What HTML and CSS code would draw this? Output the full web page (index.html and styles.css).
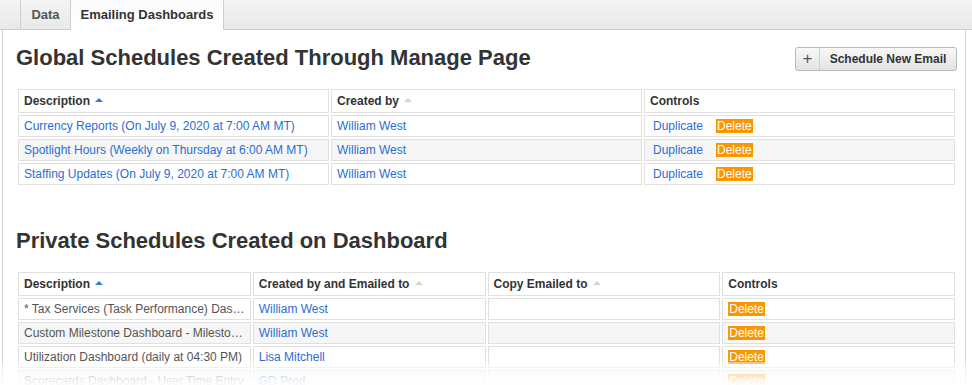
FILE: index.html
```html
<!DOCTYPE html>
<html>
<head>
<title>Emailing Dashboards</title>
<link rel="stylesheet" href="styles.css">
</head>
<body>
<div class="tabbar">
  <div class="tab-spacer"></div>
  <div class="tab">Data</div>
  <div class="tab active">Emailing Dashboards</div>
</div>

<div class="panel">
  <div class="section-head">
    <h1>Global Schedules Created Through Manage Page</h1>
    <button class="new-btn"><span class="plus">+</span><span class="label">Schedule New Email</span></button>
  </div>

  <table class="grid thirds">
    <tr>
      <th>Description <span class="sort on"></span></th>
      <th>Created by <span class="sort"></span></th>
      <th>Controls</th>
    </tr>
    <tr>
      <td><a href="#">Currency Reports (On July 9, 2020 at 7:00 AM MT)</a></td>
      <td><a href="#">William West</a></td>
      <td><a href="#" class="dup">Duplicate</a><span class="delete">Delete</span></td>
    </tr>
    <tr class="alt">
      <td><a href="#">Spotlight Hours (Weekly on Thursday at 6:00 AM MT)</a></td>
      <td><a href="#">William West</a></td>
      <td><a href="#" class="dup">Duplicate</a><span class="delete">Delete</span></td>
    </tr>
    <tr>
      <td><a href="#">Staffing Updates (On July 9, 2020 at 7:00 AM MT)</a></td>
      <td><a href="#">William West</a></td>
      <td><a href="#" class="dup">Duplicate</a><span class="delete">Delete</span></td>
    </tr>
  </table>

  <h1 class="second">Private Schedules Created on Dashboard</h1>

  <table class="grid quarters">
    <tr>
      <th>Description <span class="sort on"></span></th>
      <th>Created by and Emailed to <span class="sort"></span></th>
      <th>Copy Emailed to <span class="sort"></span></th>
      <th>Controls</th>
    </tr>
    <tr>
      <td class="desc">* Tax Services (Task Performance) Dashboard</td>
      <td><a href="#">William West</a></td>
      <td></td>
      <td><span class="delete">Delete</span></td>
    </tr>
    <tr class="alt">
      <td class="desc">Custom Milestone Dashboard - Milestones by Project</td>
      <td><a href="#">William West</a></td>
      <td></td>
      <td><span class="delete">Delete</span></td>
    </tr>
    <tr>
      <td class="desc">Utilization Dashboard (daily at 04:30 PM)</td>
      <td><a href="#">Lisa Mitchell</a></td>
      <td></td>
      <td><span class="delete">Delete</span></td>
    </tr>
    <tr class="alt">
      <td class="desc">Scorecards Dashboard - User Time Entry</td>
      <td><a href="#">GD Prod</a></td>
      <td></td>
      <td><span class="delete">Delete</span></td>
    </tr>
  </table>
</div>

<div class="fade"></div>
</body>
</html>
```

FILE: styles.css
```css
body {
  margin: 0;
  padding: 0;
  height: 385px;
  overflow: hidden;
  font-family: "Liberation Sans", Arial, sans-serif;
  color: #333;
  background-color: white;
}

.tabbar {
  display: flex;
  height: 30px;
  box-sizing: border-box;
  border-bottom: 1px solid #cdcdcd;
  background: linear-gradient(#f4f4f4, #e9e9e9);
}

.tab-spacer {
  width: 20px;
}

.tab {
  width: 50px;
  box-sizing: border-box;
  line-height: 29px;
  font-size: 13px;
  font-weight: bold;
  color: #555;
  white-space: nowrap;
  text-align: center;
  border-left: 1px solid #cfcfcf;
}

.tab.active {
  width: 154px;
  height: 30px;
  color: #333;
  background: linear-gradient(#fbfbfb, #ffffff);
  border-right: 1px solid #cfcfcf;
}

.panel {
  margin-left: 2px;
  width: 964px;
  height: 360px;
  box-sizing: border-box;
  border-left: 1px solid #cfcfcf;
  border-right: 1px solid #d8d8d8;
  padding: 0 8px 0 13px;
}

.section-head {
  display: flex;
  justify-content: space-between;
  align-items: center;
  padding-top: 14px;
  height: 28px;
  margin-bottom: 15px;
}

h1 {
  margin: 0;
  font-size: 22px;
  line-height: 28px;
  font-weight: bold;
  color: #333;
}

h1.second {
  margin: 40px 0 15px 0;
}

.new-btn {
  display: flex;
  align-items: stretch;
  height: 24px;
  width: 162px;
  padding: 0;
  border: 1px solid #b9b9b9;
  border-radius: 3px;
  background: linear-gradient(#f8f8f8, #e3e3e3);
  font-family: "Liberation Sans", Arial, sans-serif;
  font-size: 12px;
  font-weight: bold;
  color: #333;
  margin-top: 2px;
  cursor: pointer;
}

.new-btn .plus {
  width: 23px;
  border-right: 1px solid #cfcfcf;
  font-size: 17px;
  font-weight: normal;
  line-height: 21px;
  color: #555;
  text-align: center;
}

.new-btn .label {
  flex: 1;
  line-height: 22px;
  text-align: center;
}

.grid {
  width: 100%;
  border-collapse: separate;
  border-spacing: 2px;
  table-layout: fixed;
  font-size: 12px;
}

.grid th,
.grid td {
  border: 1px solid #e0e0e0;
  padding: 0 5px;
  text-align: left;
  white-space: nowrap;
  overflow: hidden;
  text-overflow: ellipsis;
}

.grid th {
  height: 22px;
  font-weight: bold;
  color: #333;
}

.grid td {
  height: 20px;
}

.grid tr.alt td {
  background-color: #f6f6f6;
}

.grid a {
  color: #2a6ed3;
  text-decoration: none;
}

.grid td.desc {
  color: #555;
}

.sort {
  display: inline-block;
  width: 0;
  height: 0;
  margin-left: 2px;
  border-left: 4px solid transparent;
  border-right: 4px solid transparent;
  border-bottom: 4px solid #d4d4d4;
  vertical-align: 3px;
}

.sort.on {
  border-bottom-color: #2d7be0;
}

.dup {
  margin: 0 13px 0 3px;
}

.delete {
  background-color: #fa9700;
  color: white;
  padding: 0 1px;
}

.fade {
  position: absolute;
  left: 0;
  right: 0;
  top: 362px;
  height: 23px;
  background: linear-gradient(rgba(255, 255, 255, 0.4), rgba(255, 255, 255, 0.97));
}
```
